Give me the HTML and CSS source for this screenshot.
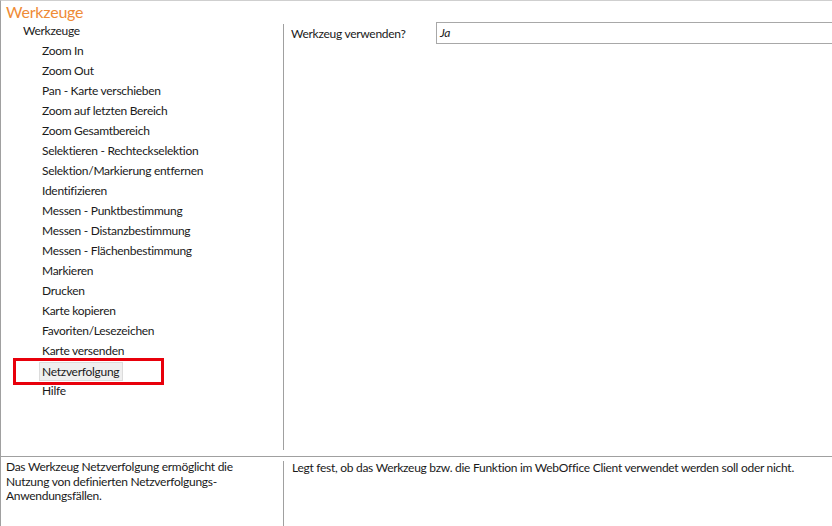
FILE: index.html
```html
<!DOCTYPE html>
<html lang="de">
<head>
<meta charset="utf-8">
<title>Werkzeuge</title>
<link rel="stylesheet" href="styles.css">
</head>
<body>
<div class="app">
  <header class="title">Werkzeuge</header>
  <div class="main">
    <nav class="tree">
      <div class="node root">Werkzeuge</div>
      <div class="node">Zoom In</div>
      <div class="node">Zoom Out</div>
      <div class="node">Pan - Karte verschieben</div>
      <div class="node">Zoom auf letzten Bereich</div>
      <div class="node">Zoom Gesamtbereich</div>
      <div class="node">Selektieren - Rechteckselektion</div>
      <div class="node">Selektion/Markierung entfernen</div>
      <div class="node">Identifizieren</div>
      <div class="node">Messen - Punktbestimmung</div>
      <div class="node">Messen - Distanzbestimmung</div>
      <div class="node">Messen - Flächenbestimmung</div>
      <div class="node">Markieren</div>
      <div class="node">Drucken</div>
      <div class="node">Karte kopieren</div>
      <div class="node">Favoriten/Lesezeichen</div>
      <div class="node">Karte versenden</div>
      <div class="node marked"><span class="selected">Netzverfolgung</span><span class="redbox"></span></div>
      <div class="node">Hilfe</div>
    </nav>
    <section class="props">
      <div class="prop-row">
        <label class="prop-label">Werkzeug verwenden?</label>
        <div class="prop-value">Ja</div>
      </div>
    </section>
  </div>
  <footer class="desc">
    <div class="desc-left">Das Werkzeug Netzverfolgung ermöglicht die Nutzung von definierten Netzverfolgungs-Anwendungsfällen.</div>
    <div class="desc-right">Legt fest, ob das Werkzeug bzw. die Funktion im WebOffice Client verwendet werden soll oder nicht.</div>
  </footer>
</div>
</body>
</html>
```
FILE: styles.css
```css
* { box-sizing: border-box; }
html, body {
  margin: 0;
  padding: 0;
  background: #ffffff;
}
body {
  font-family: Lato, "Noto Sans", "Liberation Sans", sans-serif;
  font-size: 12px;
  letter-spacing: -0.28px;
  color: #1a1a1a;
  overflow: hidden;
}
.app {
  width: 832px;
  height: 526px;
  border-top: 1px solid #cfcfcf;
  border-left: 1px solid #a0a0a0;
  display: flex;
  flex-direction: column;
}
.title {
  height: 20px;
  padding-left: 5px;
  font-size: 16px;
  letter-spacing: -0.2px;
  line-height: 22px;
  color: #ef8b36;
}
.main {
  height: 435px;
  display: flex;
}
.tree {
  width: 282px;
  flex: none;
}
.node {
  height: 20px;
  line-height: 20px;
  padding-left: 41px;
  white-space: nowrap;
}
.node.root {
  padding-left: 22px;
}
.node.marked {
  position: relative;
  padding-left: 38px;
  padding-top: 1px;
}
.selected {
  display: inline-block;
  height: 19px;
  line-height: 17px;
  padding: 0 3px 0 2px;
  background: #efefef;
  border: 1px solid #dcdcdc;
}
.redbox {
  position: absolute;
  left: 12px;
  top: -3px;
  width: 151px;
  height: 27px;
  border: 3px solid #e8000b;
}
.props {
  flex: 1;
  margin: 3px 0 6px;
  border-left: 1px solid #a0a0a0;
  padding: 0 0 0 7px;
}
.prop-row {
  display: flex;
  align-items: center;
  height: 22px;
  margin-top: -2px;
}
.prop-label {
  width: 145px;
  flex: none;
  padding-top: 1px;
}
.prop-value {
  flex: 1;
  height: 22px;
  line-height: 20px;
  border: 1px solid #a8a8a8;
  border-right: none;
  padding-left: 3px;
  font-style: italic;
}
.desc {
  flex: 1;
  border-top: 1px solid #a0a0a0;
  display: flex;
}
.desc-left {
  width: 282px;
  flex: none;
  padding: 3px 8px 0 5px;
  line-height: 14.5px;
}
.desc-right {
  flex: 1;
  margin-top: 4px;
  border-left: 1px solid #a0a0a0;
  padding: 0 0 0 8px;
  line-height: 14.5px;
}
```
